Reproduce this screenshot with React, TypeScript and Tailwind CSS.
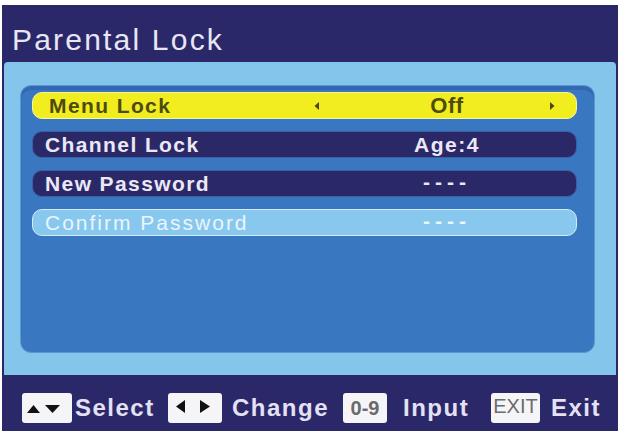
import React from "react";

type Row = {
  label: string;
  value: string;
  variant: "active" | "dark" | "light";
  arrows?: boolean;
  valueClass: string;
};

const rows: Row[] = [
  { label: "Menu Lock", value: "Off", variant: "active", arrows: true, valueClass: "text-[22px] font-bold tracking-[0.5px]" },
  { label: "Channel Lock", value: "Age:4", variant: "dark", valueClass: "text-[21px] font-bold tracking-[1.5px]" },
  { label: "New Password", value: "----", variant: "dark", valueClass: "text-[21px] font-bold tracking-[5px] -mt-[4px]" },
  { label: "Confirm Password", value: "----", variant: "light", valueClass: "text-[21px] font-bold tracking-[5px] -mt-[4px]" },
];

function Arrow({ dir }: { dir: "left" | "right" }) {
  return (
    <svg width="8" height="10" viewBox="0 0 8 10" className="block">
      {dir === "left" ? (
        <polygon points="6,1 6,9 1.5,5" fill="#4b480f" />
      ) : (
        <polygon points="2,1 2,9 6.5,5" fill="#4b480f" />
      )}
    </svg>
  );
}

function MenuRow({ row }: { row: Row }) {
  const box =
    row.variant === "active"
      ? "bg-[#f2ed1f] border-[#f7f4a4] text-[#4d4a12]"
      : row.variant === "dark"
      ? "bg-[#2b2868] border-[#3d5ea6] text-[#ebe8f6]"
      : "bg-[#88c8ee] border-[#d2eaf9] text-[#eaf5fc]";
  const label =
    row.variant === "light"
      ? "text-[21px] font-normal tracking-[2px]"
      : "text-[21px] font-bold tracking-[1.4px]";
  return (
    <div className={`h-[27px] w-[545px] rounded-[10px] border flex items-center pl-[12px] ${box}`}>
      <div className={`w-[267px] leading-none whitespace-nowrap ${label} ${row.label === "Menu Lock" ? "pl-[4px]" : ""}`}>
        {row.label}
      </div>
      <div className="w-[10px] flex justify-center">{row.arrows && <Arrow dir="left" />}</div>
      <div className={`w-[226px] pl-[24px] text-center leading-none whitespace-nowrap ${row.valueClass}`}>
        {row.value}
      </div>
      <div className="w-[8px] flex justify-center">{row.arrows && <Arrow dir="right" />}</div>
    </div>
  );
}

function KeyBox({ width, children }: { width: string; children: React.ReactNode }) {
  return (
    <div className={`${width} h-[30px] bg-[#f5f5f7] rounded-[3px] flex items-center justify-center shrink-0`}>
      {children}
    </div>
  );
}

export default function App() {
  return (
    <div className="w-[621px] h-[431px] bg-white pt-[5px] pl-[2px] font-['Liberation_Sans',Arial,sans-serif] overflow-hidden">
      <div className="w-[616px] h-[426px] bg-[#2b2869] flex flex-col">
        {/* Title */}
        <div className="h-[57px] shrink-0 pl-[10px] pt-[20px]">
          <div className="text-[30px] leading-[30px] tracking-[2.2px] text-[#e8e6f4]">Parental Lock</div>
        </div>

        {/* Frame */}
        <div className="h-[313px] shrink-0 mx-[2px] bg-[#84c5ec] rounded-t-[4px] pl-[16px] pr-[21px] pt-[23px] pb-[22px]">
          <div className="h-full rounded-[11px] bg-[#3a77c1] border border-[#5c97d4] shadow-[inset_0_4px_0_#3467b2] pl-[11px] pt-[6px] flex flex-col gap-[12px]">
            {rows.map((r) => (
              <MenuRow key={r.label} row={r} />
            ))}
          </div>
        </div>

        {/* Footer */}
        <div className="flex-1 flex items-start pt-[18px] pl-[20px] text-[24px] font-bold tracking-[1.5px] text-[#e4e1f4] leading-[30px]">
          <KeyBox width="w-[50px]">
            <svg width="50" height="30" viewBox="0 0 50 30">
              <polygon points="5,20 18,20 11.5,12" fill="#111" />
              <polygon points="23,12 38,12 30.5,20" fill="#111" />
            </svg>
          </KeyBox>
          <span className="w-[80px] ml-[3px] whitespace-nowrap">Select</span>
          <div className="ml-[13px]">
            <KeyBox width="w-[54px]">
              <svg width="54" height="30" viewBox="0 0 54 30">
                <polygon points="17,7 17,20 8,13.5" fill="#111" />
                <polygon points="32,7 32,20 42,13.5" fill="#111" />
              </svg>
            </KeyBox>
          </div>
          <span className="w-[95px] ml-[10px] whitespace-nowrap">Change</span>
          <div className="ml-[16px]">
            <KeyBox width="w-[44px]">
              <span className="text-[20px] font-bold tracking-normal text-[#6a6a6a] leading-none">0-9</span>
            </KeyBox>
          </div>
          <span className="w-[66px] ml-[16px] whitespace-nowrap">Input</span>
          <div className="ml-[22px]">
            <KeyBox width="w-[49px]">
              <span className="text-[20px] font-normal tracking-normal text-[#6c6c6c] leading-none -mt-[4px]">EXIT</span>
            </KeyBox>
          </div>
          <span className="ml-[11px] whitespace-nowrap">Exit</span>
        </div>
      </div>
    </div>
  );
}
